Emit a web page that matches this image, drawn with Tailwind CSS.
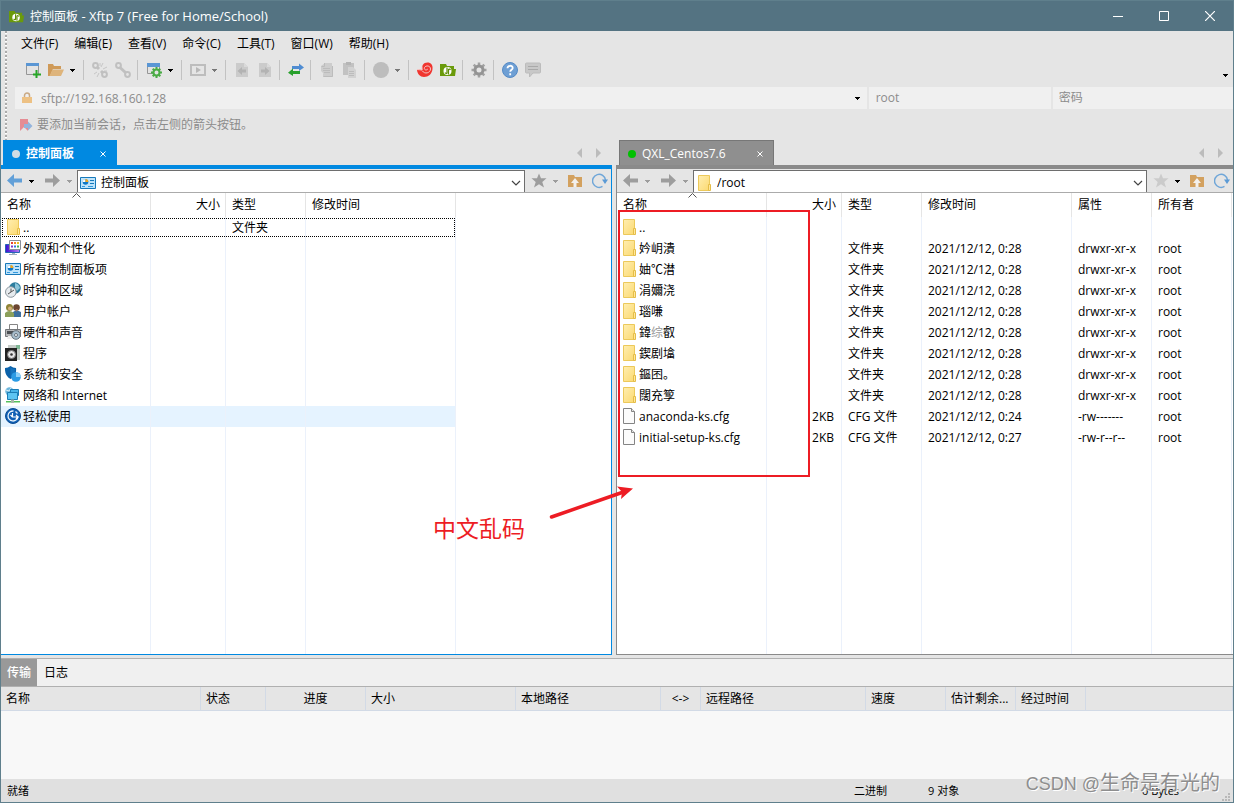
<!DOCTYPE html>
<html lang="zh-CN">
<head>
<meta charset="utf-8">
<title>控制面板 - Xftp 7 (Free for Home/School)</title>
<script src="https://cdn.jsdelivr.net/npm/@tailwindcss/browser@4"></script>
</head>
<body class="h-screen overflow-hidden font-['Open_Sans','Noto_Sans_CJK_SC',sans-serif] text-[12px] leading-4 text-black">

<svg class="absolute size-0" aria-hidden="true">
  <defs>
    <linearGradient id="gFolder" x1="0" y1="0" x2="1" y2="1"><stop offset="0" stop-color="#ffeeb0"/><stop offset="1" stop-color="#fbd971"/></linearGradient>
    <linearGradient id="gScreen" x1="0" y1="0" x2="1" y2="0"><stop offset="0" stop-color="#3a0fd0"/><stop offset="1" stop-color="#b57cf0"/></linearGradient>
  </defs>
  <symbol id="caret" viewBox="0 0 8 8"><path d="M2 3h5v1H2zM3 4h3v1H3zM4 5h1v1H4z" fill="currentColor"/></symbol>
  <symbol id="logo" viewBox="0 0 16 16"><path d="M0 2h6l1 2h7v3h2l-1 7H0z" fill="#6a9a0b"/><circle cx="7.500" cy="9" r="4" fill="#fff"/><path d="M7 5.500v5.500q-1 1-2-.5M8.500 12.500V7.500q1-1 2 .5" fill="none" stroke="#5f8d07" stroke-width="1.200"/></symbol>
  <symbol id="new" viewBox="0 0 16 16"><path d="M1.500 1.500h12v11h-12z" fill="#e3e3e3" stroke="#969696"/><path d="M1 1h13v3H1z" fill="#5a96d4"/><path d="M10.500 8h2v3.500H16v2h-3.500V16h-2v-2.500H8v-2h2.500z" fill="#27a527"/></symbol>
  <symbol id="open" viewBox="0 0 16 16"><path d="M0 2h5l1 2h7v3H5L2 14H0z" fill="#cf9a58"/><path d="M4.500 7.500H16L13 14H1.500z" fill="#deb47b"/></symbol>
  <symbol id="unlink" viewBox="0 0 16 16"><g fill="none" stroke="#c0c0c0" stroke-width="2"><circle cx="3.500" cy="3.500" r="2.400"/><circle cx="12.500" cy="12.500" r="2.400"/><path d="M5.500 5.500l1.500 1.500M9 9l2 2" stroke-width="3"/></g><path d="M9 5l2-4M11 7l4-2M5 10l-3 2M7 11l-2 4M12 9h3M8 1v3" stroke="#c6c6c6" fill="none"/></symbol>
  <symbol id="link" viewBox="0 0 16 16"><g fill="none" stroke="#c0c0c0" stroke-width="2"><circle cx="3.500" cy="3.500" r="2.400"/><circle cx="12.500" cy="12.500" r="2.400"/><path d="M5 5.500l6 5.500" stroke-width="3"/></g></symbol>
  <symbol id="props" viewBox="0 0 16 16"><path d="M1.500 1.500h12v10h-12z" fill="#e3e3e3" stroke="#969696"/><path d="M1 1h13v4H1z" fill="#5a96d4"/><g stroke="#4aac45" fill="none"><circle cx="10.500" cy="10.500" r="3" stroke-width="2" fill="#e3e3e3"/><path d="M10.500 5v2M10.500 14v2M5 10.500h2M14 10.500h2M6.700 6.700L8 8M13 13l1.300 1.300M14.300 6.700L13 8M8 13l-1.300 1.300" stroke-width="2"/></g></symbol>
  <symbol id="play" viewBox="0 0 16 16"><path d="M1 3h14v10H1z" fill="none" stroke="#bdbdbd" stroke-width="2"/><path d="M6 5l5 3-5 3z" fill="#b8b8b8"/></symbol>
  <symbol id="docL" viewBox="0 0 16 16"><path d="M2 1h8l4 4v10H2z" fill="#cbcbcb"/><path d="M10 1v4h4" fill="#dadada"/><path d="M8 5v2.500h4v3H8V13L3.500 9z" fill="#b3b3b3"/></symbol>
  <symbol id="docR" viewBox="0 0 16 16"><path d="M2 1h8l4 4v10H2z" fill="#cbcbcb"/><path d="M10 1v4h4" fill="#dadada"/><path d="M8 5v2.500H4v3h4V13l4.500-4z" fill="#b3b3b3"/></symbol>
  <symbol id="transfer" viewBox="0 0 16 16"><path d="M4 4h7V1.500l5 4-5 3.500V7H4z" fill="#4f8cd2"/><path d="M12 9H5V6.500l-5 4.200L5 14v-2h7z" fill="#28a02c"/></symbol>
  <symbol id="copy" viewBox="0 0 16 16"><path d="M6 1h7v12H6L2 9V4zM11 4h3v11H4v-3" fill="#cdcdcd"/><path d="M5.500 1v3.500H2.500M4 6.500h7M4 8.500h7M5 10.500h6M13.500 4v10.500H4.500" fill="none" stroke="#bcbcbc"/></symbol>
  <symbol id="paste" viewBox="0 0 16 16"><path d="M1 1h11v12H1z" fill="#c2c2c2"/><path d="M4 0h5v3H4z" fill="#b5b5b5"/><path d="M6 5h5l3 3v8H6z" fill="#d2d2d2"/><path d="M7 9.500h5M7 11.500h5M7 13.500h5" stroke="#bcbcbc"/></symbol>
  <symbol id="disc" viewBox="0 0 16 16"><circle cx="8" cy="8" r="8" fill="#bdbdbd"/></symbol>
  <symbol id="shell" viewBox="0 0 16 16"><path d="M0 8q3-1 5.500.5C4 4 6.500.5 10.500.5 14 .5 16 3 15.500 7c-.5 5-4 8-8.500 8C3 15 .5 12 0 8z" fill="#f0352f"/><path d="M5.500 9c2 3.500 8 2 8-2 0-3.500-4.500-4-6-1.500-.8 2 1.500 3.500 3.300 1.500M0 7.500L5 8V4.500" fill="none" stroke="#f5c7c5"/></symbol>
  <symbol id="gear" viewBox="0 0 16 16"><path d="M8 .5v15M.5 8h15M2.700 2.700l10.600 10.600M13.300 2.700L2.700 13.300" stroke="#a2a2a2" stroke-width="2.500"/><circle cx="8" cy="8" r="4" fill="#e5e5e5" stroke="#949494" stroke-width="3"/></symbol>
  <symbol id="help" viewBox="0 0 16 16"><circle cx="8" cy="8" r="7.500" fill="#6e9fd4" stroke="#548ac6"/><path d="M5.500 6.200C5.500 3 10.700 3 10.700 6 10.700 7.800 8.200 7.700 8.200 9.800M8.200 11.300v2" fill="none" stroke="#fff" stroke-width="1.800"/></symbol>
  <symbol id="chat" viewBox="0 0 16 16"><path d="M1.500 1h13q1 0 1 1v8q0 1-1 1H8l-3.500 4v-4h-3q-1 0-1-1V2q0-1 1-1z" fill="#c8c8c8" stroke="#bcbcbc"/><path d="M3 4.500h10M3 7.500h10" stroke="#a9a9a9"/></symbol>
  <symbol id="lock" viewBox="0 0 12 12"><path d="M3.500 6V3.500a2.500 2.500 0 0 1 5 0V6" fill="none" stroke="#c9a985" stroke-width="1.500"/><path d="M1 5h10v6H1z" fill="#edc184"/></symbol>
  <symbol id="flag" viewBox="0 0 14 14"><path d="M1 1h8v12L5 9l-4 4z" fill="#e58c94"/><path d="M5 6h4V3.500l4.500 4.500L9 12.500V10H5z" fill="#94b4dc"/></symbol>
  <symbol id="left" viewBox="0 0 16 16"><path d="M0 7.500L7 1v4.500h8v4H7V14z" fill="currentColor"/></symbol>
  <symbol id="right" viewBox="0 0 16 16"><path d="M15 7.500L8 1v4.500H0v4h8V14z" fill="currentColor"/></symbol>
  <symbol id="star" viewBox="0 0 16 16"><path d="M8 .5l2 4.800h5.500L11.300 8.900l1.700 5.600-5-3.200-5 3.200 1.700-5.600L.5 5.300H6z" fill="currentColor"/></symbol>
  <symbol id="up" viewBox="0 0 16 16"><path d="M1 2h6l1 2h7v10H1z" fill="#d3a15f"/><path d="M8 5l4 5H9.500v4h-3v-4H4z" fill="#f3f0ec"/></symbol>
  <symbol id="refresh" viewBox="0 0 16 16"><path d="M10.500 13.400A6.500 6.500 0 1 1 13.500 7" fill="none" stroke="#6fa6d8" stroke-width="1.500"/><path d="M10 6.500h6L13 11z" fill="#5b9ad5"/></symbol>
  <symbol id="chev" viewBox="0 0 10 6"><path d="M1 1l4 4 4-4" fill="none" stroke="#444" stroke-width="1.200"/></symbol>
  <symbol id="tri" viewBox="0 0 6 10"><path d="M0 0l5 5-5 5z" fill="#bcbcbc"/></symbol>
  <symbol id="folder" viewBox="0 0 16 16"><path d="M2.500.5h11v15h-11z" fill="url(#gFolder)" stroke="#ecc95a"/><path d="M12.500 9.500h2v6h-2z" fill="#ffe79a" stroke="#e5bd48"/></symbol>
  <symbol id="file" viewBox="0 0 16 16"><path d="M2.500.5h8l3 3v12h-11z" fill="#fbfbfb" stroke="#848484"/><path d="M10.500.5v3h3" fill="#e6e6e6" stroke="#848484"/></symbol>
  <symbol id="cpanel" viewBox="0 0 16 16"><path d="M.5 2.500h15v11H.5z" fill="#bfe4fb" stroke="#1779ba"/><circle cx="5.500" cy="7" r="2.800" fill="#0c78c7"/><path d="M5.500 7V4.200A2.800 2.800 0 0 0 2.700 7z" fill="#fff"/><path d="M5.500 7V4a3 3 0 0 1 2.800 3z" fill="#f5a81c"/><path d="M10 5h4v1h-4zM10 8h4v1h-4z" fill="#1779ba"/><path d="M2 11h3v1H2zM8 11h5v1H8z" fill="#3399dd"/></symbol>
  <symbol id="appear" viewBox="0 0 16 16"><path d="M.5 4.500h14v8H.5z" fill="url(#gScreen)" stroke="#2467b5"/><path d="M4.500.500h11v9h-11z" fill="#fff" stroke="#8a8f98"/><path d="M6 2h2v2H6z" fill="#e8412f"/><path d="M9 2h2v2H9z" fill="#f08b22"/><path d="M12 2h2v2h-2z" fill="#e8c322"/><path d="M6 5.500h2v2H6z" fill="#8034c8"/><path d="M9 5.500h2v2H9z" fill="#2d78dd"/><path d="M12 5.500h2v2h-2z" fill="#42ae4f"/><path d="M7 13h3v1H7zM4 14h8v1H4z" fill="#9fb2c2"/></symbol>
  <symbol id="clock" viewBox="0 0 16 16"><circle cx="10" cy="6" r="5.800" fill="#2c7d9e"/><path d="M10 1q4 1 5 5l-3 3-2-3z" fill="#8bc5da"/><circle cx="5.800" cy="10" r="5.300" fill="#e6ebee" stroke="#8d979e"/><path d="M6 6.500V10l3-2M3 12l3-2" fill="none" stroke="#555"/></symbol>
  <symbol id="users" viewBox="0 0 16 16"><circle cx="11.500" cy="4.500" r="3.300" fill="#6b4630"/><path d="M8 14V9q3.500-3 8 0v5z" fill="#3d6f9e"/><circle cx="4.500" cy="4.500" r="3.500" fill="#8f8335"/><circle cx="5" cy="5.500" r="2" fill="#d5b27e"/><path d="M0 14v-4q4-4 9 0v4z" fill="#8ba05b"/><path d="M10.500 6l1 3L13 6z" fill="#a87351"/></symbol>
  <symbol id="hard" viewBox="0 0 16 16"><path d="M4.500.5h8v5h-8z" fill="#fff" stroke="#858585"/><path d="M.500 5.500h15v7H.5z" fill="#b4b6b8" stroke="#74777a"/><path d="M2 7h8v3H2z" fill="#4c5054"/><path d="M3 12h7v3H2z" fill="#eee"/><circle cx="11" cy="11" r="4.300" fill="#a9bfce" stroke="#66727c"/><circle cx="11" cy="11" r="1.500" fill="#fff" stroke="#66727c"/></symbol>
  <symbol id="prog" viewBox="0 0 16 16"><path d="M3 0h12v15H3z" fill="#c7cdc9"/><path d="M11 0h4v4h-4z" fill="#80b896"/><path d="M0 3h12v13H0z" fill="#222"/><circle cx="6.500" cy="9.500" r="4" fill="#e5e5e5" stroke="#777"/><circle cx="6.500" cy="9.500" r="1.300" fill="#333"/></symbol>
  <symbol id="shield" viewBox="0 0 16 16"><path d="M0 2q3 0 5.500-2Q8 2 11 2q1 8-5.500 11Q-.5 10 0 2z" fill="#0b62aa"/><path d="M5.500 1.500Q7.500 3 10 3q0 6-4.500 8.500z" fill="#1673bd"/><circle cx="11" cy="11" r="4.800" fill="#2c9be4"/><path d="M11 11V6.200a4.800 4.800 0 0 1 4.800 4.800z" fill="#8fd0f8"/></symbol>
  <symbol id="net" viewBox="0 0 16 16"><circle cx="4.500" cy="4.500" r="4.200" fill="#6fb7dc"/><path d="M1 3l3 1 2-3" stroke="#d6eef8" fill="none"/><path d="M5.500 2.500h8v6h-8z" fill="#48b4e8" stroke="#1b7db6"/><path d="M2.500 5.500h10v7h-10z" fill="#5cc4f2" stroke="#1b7db6"/><path d="M1 14h14v1.500H1z" fill="#54c25b"/><path d="M6 12.500h3V16H6z" fill="#a6b6a8"/></symbol>
  <symbol id="ease" viewBox="0 0 16 16"><circle cx="8" cy="8" r="7.500" fill="#0f5fb4" stroke="#0a4c93"/><path d="M8.500 3A5 5 0 1 0 13 8.500" fill="none" stroke="#e8f2fb" stroke-width="1.300"/><path d="M10.500 3.500l2 2" stroke="#e8f2fb" stroke-width="1.300"/><path d="M7.500 5v4H13M11 7l2 2-2 2M5.500 7l2 2" fill="none" stroke="#fff" stroke-width="1.200"/></symbol>
</svg>

<div class="relative flex h-full flex-col border border-[#5f7f8c] bg-[#e5e5e5]">

  <header class="flex h-[30px] shrink-0 items-center bg-[#547382] pl-2 text-white">
    <svg class="size-[15px]"><use href="#logo"/></svg>
    <h1 class="ml-[6px] text-[13px]"><span class="text-[12px]">控制面板</span> - Xftp 7 (Free for Home/School)</h1>
    <div class="ml-auto flex h-full">
      <button aria-label="最小化" class="flex w-[46px] items-center justify-center"><svg class="h-[10px] w-[10px]" viewBox="0 0 10 10"><path d="M0 5.500h10" stroke="#fff"/></svg></button>
      <button aria-label="最大化" class="flex w-[46px] items-center justify-center"><svg class="h-[10px] w-[10px]" viewBox="0 0 10 10"><path d="M.5.5h9v9h-9z" fill="none" stroke="#fff"/></svg></button>
      <button aria-label="关闭" class="flex w-[46px] items-center justify-center"><svg class="h-[10px] w-[10px]" viewBox="0 0 10 10"><path d="M0 0l10 10M10 0L0 10" stroke="#fff" stroke-width="1.200"/></svg></button>
    </div>
  </header>

  <div class="flex h-[109px] shrink-0">
    <div class="ml-1 w-[2px] bg-[repeating-linear-gradient(to_bottom,#ababab_0_2px,#fff_2px_3px,#e5e5e5_3px_4px)]"></div>
    <div class="flex min-w-0 flex-1 flex-col">
      <nav class="flex h-[26px] items-center gap-4 pl-[14px]">
        <button>文件(F)</button><button>编辑(E)</button><button>查看(V)</button><button>命令(C)</button><button>工具(T)</button><button>窗口(W)</button><button>帮助(H)</button>
      </nav>
      <div class="flex h-[30px] items-center pb-1 pl-[14px]" id="toolbar"></div>
      <div class="grid h-[22px] grid-cols-[851fr_182fr_180fr] gap-[2px] pl-2 text-[#8c8c8c]">
        <div class="flex min-w-0 items-center bg-[#f0f0f0] pr-[6px]">
          <svg class="ml-[6px] size-[12px]"><use href="#lock"/></svg>
          <input aria-label="主机" class="ml-2 min-w-0 flex-1 pt-px outline-none" value="sftp://192.168.160.128">
          <button aria-label="历史地址" class="text-black"><svg class="size-2"><use href="#caret"/></svg></button>
        </div>
        <input aria-label="用户名" class="min-w-0 bg-[#f0f0f0] pl-[7px] outline-none" value="root">
        <input aria-label="密码" class="min-w-0 bg-[#f0f0f0] pl-[6px] outline-none placeholder:text-[#8c8c8c]" placeholder="密码">
      </div>
      <div class="flex flex-1 items-center pt-px pl-[12px] text-[#8c8c8c]">
        <svg class="size-[14px]"><use href="#flag"/></svg>
        <span class="ml-[4px]">要添加当前会话，点击左侧的箭头按钮。</span>
      </div>
    </div>
  </div>

  <main class="grid min-h-0 flex-1 grid-cols-[611fr_4px_617fr]">
    <section class="flex min-w-0 flex-col">
      <div class="flex h-[25px] shrink-0 pl-[2px]">
        <div class="flex w-[114px] items-center bg-[#0089e1] pt-[2px] pl-[9px] pr-[11px] font-bold text-white">
          <span class="size-2 rounded-full bg-[#d0dce4]"></span>
          <span class="ml-[6px]">控制面板</span>
          <button aria-label="关闭标签" class="ml-auto"><svg class="size-[6px]" viewBox="0 0 6 6"><path d="M.5.5l5 5M5.500.5l-5 5" stroke="#fff"/></svg></button>
        </div>
        <div class="ml-auto flex items-center gap-[14px] pr-[10px]">
          <button aria-label="上一个标签"><svg class="h-[10px] w-[6px] rotate-180"><use href="#tri"/></svg></button>
          <button aria-label="下一个标签"><svg class="h-[10px] w-[6px]"><use href="#tri"/></svg></button>
        </div>
      </div>
      <div class="flex min-h-0 flex-1 flex-col border-t-4 border-r border-b border-[#0089e1] bg-white">
        <div class="flex h-6 shrink-0 items-center border-b border-[#ababab] bg-[#e5e5e5] pl-[6px] pr-[3px] text-[#9d9d9d]">
          <button aria-label="后退" class="text-[#62a0d8]"><svg class="size-4"><use href="#left"/></svg></button>
          <button aria-label="后退历史" class="ml-1 text-black"><svg class="size-2"><use href="#caret"/></svg></button>
          <button aria-label="前进" class="ml-[10px]"><svg class="size-4"><use href="#right"/></svg></button>
          <button aria-label="前进历史" class="ml-1"><svg class="size-2"><use href="#caret"/></svg></button>
          <div class="mt-px ml-1 flex h-[22px] flex-1 items-center border-x border-t border-[#6e6e6e] bg-white pt-[2px] pr-[3px] pl-[2px] text-black">
            <svg class="size-4"><use href="#cpanel"/></svg>
            <input aria-label="本地路径" class="ml-[5px] min-w-0 flex-1 pt-px outline-none" value="控制面板">
            <button aria-label="展开路径"><svg class="h-[6px] w-[10px]"><use href="#chev"/></svg></button>
          </div>
          <button aria-label="收藏" class="ml-[6px]"><svg class="size-4"><use href="#star"/></svg></button>
          <button aria-label="收藏列表" class="ml-1"><svg class="size-2"><use href="#caret"/></svg></button>
          <button aria-label="上级目录" class="ml-2"><svg class="size-4"><use href="#up"/></svg></button>
          <button aria-label="刷新" class="ml-[9px]"><svg class="size-4"><use href="#refresh"/></svg></button>
        </div>
        <div class="min-h-0 flex-1">
          <table class="h-full w-[455px] table-fixed border-separate border-spacing-0 text-left">
            <thead><tr class="h-6 *:border-r *:border-[#e5e5e5] *:font-normal">
              <th class="relative w-[150px] pl-[6px]">名称<svg class="absolute top-0 left-[71px] h-[5px] w-[9px]" viewBox="0 0 9 5"><path d="M.5 4.500l4-4 4 4" fill="none" stroke="#555"/></svg></th>
              <th class="w-[75px] pr-[5px] text-right">大小</th>
              <th class="w-[80px] pl-[6px]">类型</th>
              <th class="w-[150px] pl-[6px]">修改时间</th>
            </tr></thead>
            <tbody id="local"></tbody>
          </table>
        </div>
      </div>
    </section>

    <div></div>

    <section class="relative flex min-w-0 flex-col">
      <div class="flex h-[25px] shrink-0 pl-[3px]">
        <div class="flex w-[155px] items-center border border-b-0 border-[#777] bg-[#8f8f8f] pt-[2px] pl-2 pr-[10px] text-white">
          <span class="size-2 rounded-full bg-[#00c000]"></span>
          <span class="ml-[6px]">QXL_Centos7.6</span>
          <button aria-label="关闭标签" class="ml-auto"><svg class="size-[6px]" viewBox="0 0 6 6"><path d="M.5.5l5 5M5.500.5l-5 5" stroke="#fff"/></svg></button>
        </div>
        <div class="ml-auto flex items-center gap-[14px] pr-[9px]">
          <button aria-label="上一个标签"><svg class="h-[10px] w-[6px] rotate-180"><use href="#tri"/></svg></button>
          <button aria-label="下一个标签"><svg class="h-[10px] w-[6px]"><use href="#tri"/></svg></button>
        </div>
      </div>
      <div class="flex min-h-0 flex-1 flex-col border-t-4 border-b border-l border-[#8a8a8a] bg-white">
        <div class="flex h-6 shrink-0 items-center border-b border-[#ababab] bg-[#e5e5e5] pl-[6px] pr-[3px] text-[#9d9d9d]">
          <button aria-label="后退"><svg class="size-4"><use href="#left"/></svg></button>
          <button aria-label="后退历史" class="ml-1"><svg class="size-2"><use href="#caret"/></svg></button>
          <button aria-label="前进" class="ml-[10px]"><svg class="size-4"><use href="#right"/></svg></button>
          <button aria-label="前进历史" class="ml-1"><svg class="size-2"><use href="#caret"/></svg></button>
          <div class="mt-px ml-1 flex h-[22px] flex-1 items-center border-x border-t border-[#6e6e6e] bg-white pt-[2px] pr-[3px] pl-[2px] text-black">
            <svg class="size-4"><use href="#folder"/></svg>
            <input aria-label="远程路径" class="ml-[5px] min-w-0 flex-1 pt-px outline-none" value="/root">
            <button aria-label="展开路径"><svg class="h-[6px] w-[10px]"><use href="#chev"/></svg></button>
          </div>
          <button aria-label="收藏" class="ml-[6px] text-[#cbcbcb]"><svg class="size-4"><use href="#star"/></svg></button>
          <button aria-label="收藏列表" class="ml-1 text-black"><svg class="size-2"><use href="#caret"/></svg></button>
          <button aria-label="上级目录" class="ml-2"><svg class="size-4"><use href="#up"/></svg></button>
          <button aria-label="刷新" class="ml-[9px]"><svg class="size-4"><use href="#refresh"/></svg></button>
        </div>
        <div class="min-h-0 flex-1">
          <table class="h-full w-[615px] table-fixed border-separate border-spacing-0 text-left">
            <thead><tr class="h-6 *:border-r *:border-[#e5e5e5] *:font-normal">
              <th class="relative w-[150px] pl-[6px]">名称<svg class="absolute top-0 left-[71px] h-[5px] w-[9px]" viewBox="0 0 9 5"><path d="M.5 4.500l4-4 4 4" fill="none" stroke="#555"/></svg></th>
              <th class="w-[75px] pr-[5px] text-right">大小</th>
              <th class="w-[80px] pl-[6px]">类型</th>
              <th class="w-[150px] pl-[6px]">修改时间</th>
              <th class="w-[80px] pl-[6px]">属性</th>
              <th class="w-[80px] pl-[6px]">所有者</th>
            </tr></thead>
            <tbody id="remote"></tbody>
          </table>
        </div>
      </div>
      <div class="pointer-events-none absolute top-[70px] left-[2px] h-[267px] w-[192px] border-2 border-[#ed1c24]"></div>
      <svg class="pointer-events-none absolute top-[340px] -left-[70px] h-[42px] w-[92px]" viewBox="0 0 92 42"><path d="M5.500 37L76 12.500" stroke="#ed1c24" stroke-width="3.500" stroke-linecap="round"/><path d="M71 6.500l16 2-12 10.500 1-7z" fill="#ed1c24"/></svg>
      <p class="pointer-events-none absolute top-[372px] -left-[183px] text-[23px] leading-8 whitespace-nowrap text-[#ed1c24]">中文乱码</p>
    </section>
  </main>

  <section class="mt-[3px] flex h-[121px] shrink-0 flex-col border-t border-[#b0b0b0] bg-[#f8f8f8]">
    <div class="flex h-7 shrink-0 border-b border-[#b0b0b0] bg-[#f0f0f0]">
      <button class="w-9 bg-[#999] font-medium text-white">传输</button>
      <button class="px-[7px]">日志</button>
    </div>
    <table class="w-full table-fixed border-separate border-spacing-0 text-left">
      <thead><tr class="h-6 bg-[#e5e5e5] *:border-r *:border-b *:border-[#d2dae6] *:pl-[5px] *:font-normal">
        <th class="w-[200px]">名称</th><th class="w-[65px]">状态</th><th class="w-[100px] pr-[5px] text-center">进度</th><th class="w-[150px]">大小</th><th class="w-[145px]">本地路径</th><th class="w-[40px] pr-[5px] text-center">&lt;-&gt;</th><th class="w-[165px]">远程路径</th><th class="w-[80px]">速度</th><th class="w-[70px]"><div class="truncate">估计剩余...</div></th><th class="w-[70px]">经过时间</th><th></th>
      </tr></thead>
    </table>
  </section>

  <footer class="flex h-[23px] shrink-0 items-center bg-[#e0e0e0] pl-[6px] text-[11px]">
    <span class="flex-1">就绪</span>
    <span class="w-[74px]">二进制</span>
    <span class="w-[214px]">9 对象</span>
    <span class="w-[80px]">0 Bytes</span>
    <svg class="h-[9px] w-[11px] self-end" viewBox="0 0 11 9"><path d="M6 0h2v2H6zM3 3h2v2H3zM6 3h2v2H6zM0 6h2v2H0zM3 6h2v2H3zM6 6h2v2H6z" fill="#b8b8b8"/></svg>
  </footer>

  <button aria-label="工具栏选项" class="absolute top-[70px] right-[4px]"><svg class="size-2"><use href="#caret"/></svg></button>
  <p class="pointer-events-none absolute right-[13px] bottom-1 text-[20px] leading-7 text-[#8e8e8e] text-shadow-[1px_1px_0_#ffffff]"><span class="font-['Liberation_Sans',sans-serif] text-[18px]">CSDN @</span>生命是有光的</p>
</div>

<script>
const tools = [
  ['new', '新建'], ['open', '打开'], ['caret', '打开列表', 'text-black'], '|',
  ['unlink', '断开'], ['link', '重新连接'], '|',
  ['props', '属性'], ['caret', '属性列表', 'text-black'], '|',
  ['play', '执行'], ['caret', '执行列表', 'text-[#777]'], '|',
  ['docL', '下载'], ['docR', '上传'], '|', ['transfer', '传输'], '|',
  ['copy', '复制'], ['paste', '粘贴'], '|',
  ['disc', '编码'], ['caret', '编码列表', 'text-[#777]'], '|',
  ['shell', 'Xshell'], ['logo', 'Xftp'], '|', ['gear', '选项'], '|', ['help', '帮助'], ['chat', '反馈']
];
document.getElementById('toolbar').innerHTML = tools.map(t =>
  t === '|' ? '<span class="mr-1 ml-[3px] h-5 w-px bg-[#c2c2c2]"></span>'
  : t[0] === 'caret' ? `<button aria-label="${t[1]}" class="mr-[3px] flex w-[10px] justify-center ${t[2]}"><svg class="size-2"><use href="#caret"/></svg></button>`
  : `<button aria-label="${t[1]}" class="flex w-[23px] justify-center"><svg class="size-4"><use href="#${t[0]}"/></svg></button>`
).join('');

const name = (icon, text) => `<td class="pl-1"><div class="flex items-center gap-[2px] whitespace-nowrap"><svg class="mb-[2px] size-4 shrink-0"><use href="#${icon}"/></svg><span>${text}</span></div></td>`;
const cell = text => `<td class="pl-[6px] whitespace-nowrap">${text}</td>`;
const size = text => `<td class="pr-[7px] text-right">${text}</td>`;
const base = 'h-[21px] *:border-r *:border-[#ebf1fb]';

const local = [['folder', '..', '文件夹'], ['appear', '外观和个性化'], ['cpanel', '所有控制面板项'], ['clock', '时钟和区域'], ['users', '用户帐户'], ['hard', '硬件和声音'], ['prog', '程序'], ['shield', '系统和安全'], ['net', '网络和 Internet'], ['ease', '轻松使用']];
document.getElementById('local').innerHTML = local.map((r, i) => {
  const state = i === 0 ? 'outline-1 -outline-offset-2 outline-dotted outline-black' : i === 9 ? 'bg-[#e5f3ff]' : '';
  return `<tr class="${base} ${state}">${name(r[0], r[1])}${size('')}${cell(r[2] || '')}${cell('')}</tr>`;
}).join('') + '<tr class="*:border-r *:border-[#ebf1fb]"><td></td><td></td><td></td><td></td></tr>';

const dirs = ['妗岄潰', '妯℃澘', '涓嬭浇', '瑙嗛', '鍏<span class="text-[#999]">综</span>叡', '鍥剧墖', '鏂囨。', '闊充箰'];
const remote = [['folder', '..', '', '', '', '', '']]
  .concat(dirs.map(d => ['folder', d, '', '文件夹', '2021/12/12, 0:28', 'drwxr-xr-x', 'root']))
  .concat([['file', 'anaconda-ks.cfg', '2KB', 'CFG 文件', '2021/12/12, 0:24', '-rw-------', 'root'], ['file', 'initial-setup-ks.cfg', '2KB', 'CFG 文件', '2021/12/12, 0:27', '-rw-r--r--', 'root']]);
document.getElementById('remote').innerHTML = remote.map(r =>
  `<tr class="${base}">${name(r[0], r[1])}${size(r[2])}${r.slice(3).map(cell).join('')}</tr>`
).join('') + '<tr class="*:border-r *:border-[#ebf1fb]"><td></td><td></td><td></td><td></td><td></td><td></td></tr>';
</script>
</body>
</html>
